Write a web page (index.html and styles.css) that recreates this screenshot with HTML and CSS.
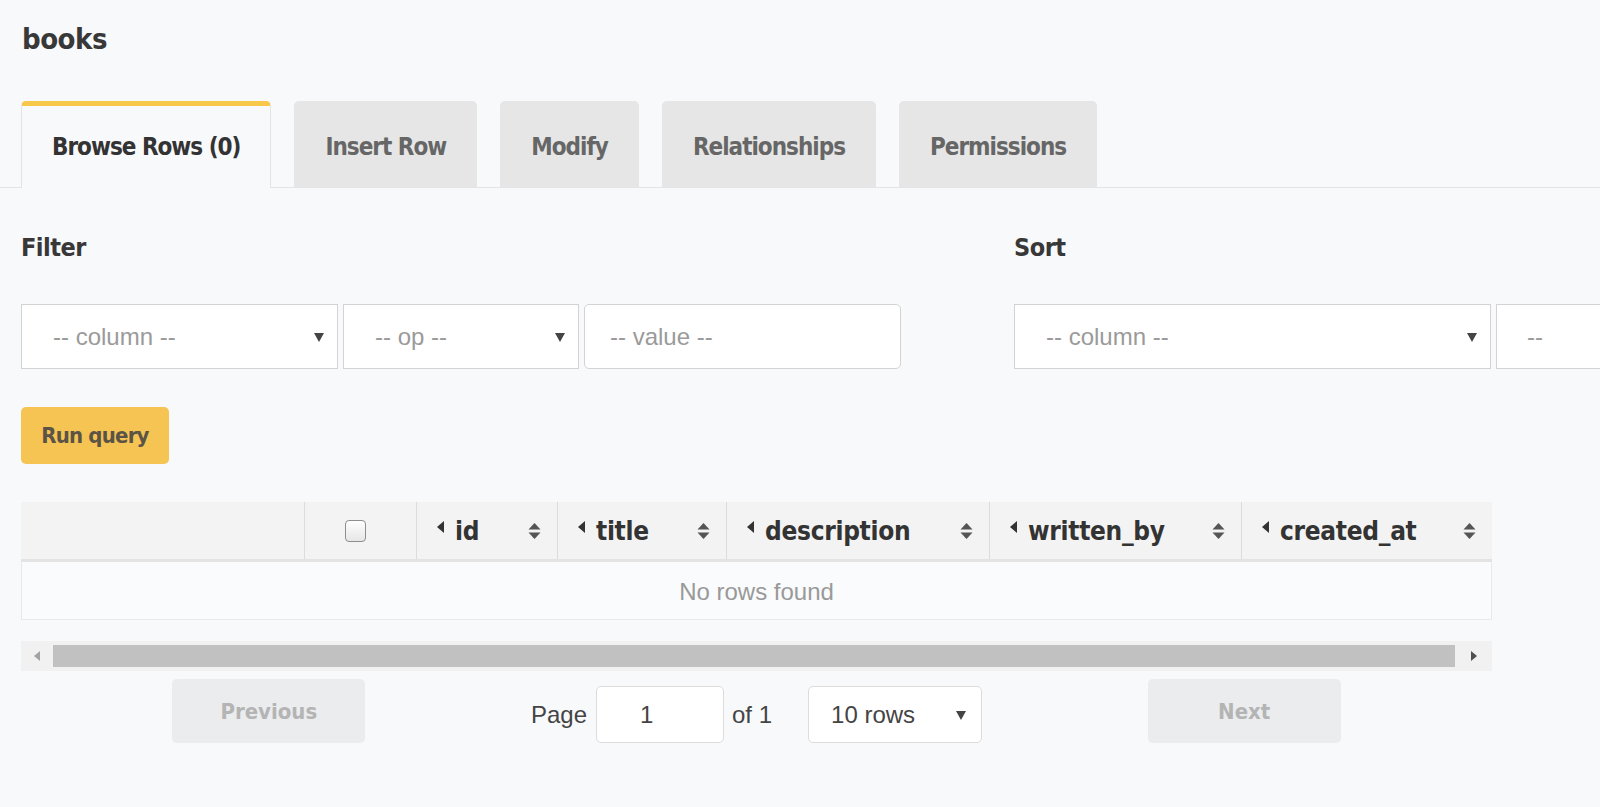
FILE: index.html
```html
<!DOCTYPE html>
<html lang="en">
<head>
<meta charset="utf-8">
<title>books</title>
<link rel="stylesheet" href="styles.css">
</head>
<body>
<div class="page">
  <h1 class="title">books</h1>

  <nav class="tabbar">
    <div class="tab active">Browse Rows (0)</div>
    <div class="tab">Insert Row</div>
    <div class="tab">Modify</div>
    <div class="tab">Relationships</div>
    <div class="tab">Permissions</div>
  </nav>

  <main class="content">
    <div class="query">
      <section class="filter">
        <h2 class="label">Filter</h2>
        <div class="controls">
          <div class="select sel-col"><span>-- column --</span><svg class="arrow" width="10" height="10" viewBox="0 0 10 10"><polygon points="0,1 10,1 5,10" fill="#444"/></svg></div>
          <div class="select sel-op"><span>-- op --</span><svg class="arrow" width="10" height="10" viewBox="0 0 10 10"><polygon points="0,1 10,1 5,10" fill="#444"/></svg></div>
          <div class="input sel-val"><span>-- value --</span></div>
        </div>
      </section>
      <section class="sort">
        <h2 class="label">Sort</h2>
        <div class="controls">
          <div class="select sort-col"><span>-- column --</span><svg class="arrow" width="10" height="10" viewBox="0 0 10 10"><polygon points="0,1 10,1 5,10" fill="#444"/></svg></div>
          <div class="select sort-dir"><span>--</span></div>
        </div>
      </section>
    </div>

    <button class="run">Run query</button>

    <div class="table">
      <div class="thead">
        <div class="th th-blank"></div>
        <div class="th th-check"><span class="checkbox"></span></div>
        <div class="th"><span class="th-name"><svg class="caret" width="7" height="12" viewBox="0 0 7 12"><polygon points="7,0 7,12 0,6" fill="#333"/></svg>id</span><svg class="sorter" width="13" height="16" viewBox="0 0 13 16"><polygon points="6.5,0 12.5,6.5 0.5,6.5" fill="#555"/><polygon points="0.5,9.5 12.5,9.5 6.5,16" fill="#555"/></svg></div>
        <div class="th"><span class="th-name"><svg class="caret" width="7" height="12" viewBox="0 0 7 12"><polygon points="7,0 7,12 0,6" fill="#333"/></svg>title</span><svg class="sorter" width="13" height="16" viewBox="0 0 13 16"><polygon points="6.5,0 12.5,6.5 0.5,6.5" fill="#555"/><polygon points="0.5,9.5 12.5,9.5 6.5,16" fill="#555"/></svg></div>
        <div class="th"><span class="th-name"><svg class="caret" width="7" height="12" viewBox="0 0 7 12"><polygon points="7,0 7,12 0,6" fill="#333"/></svg>description</span><svg class="sorter" width="13" height="16" viewBox="0 0 13 16"><polygon points="6.5,0 12.5,6.5 0.5,6.5" fill="#555"/><polygon points="0.5,9.5 12.5,9.5 6.5,16" fill="#555"/></svg></div>
        <div class="th"><span class="th-name"><svg class="caret" width="7" height="12" viewBox="0 0 7 12"><polygon points="7,0 7,12 0,6" fill="#333"/></svg>written_by</span><svg class="sorter" width="13" height="16" viewBox="0 0 13 16"><polygon points="6.5,0 12.5,6.5 0.5,6.5" fill="#555"/><polygon points="0.5,9.5 12.5,9.5 6.5,16" fill="#555"/></svg></div>
        <div class="th"><span class="th-name"><svg class="caret" width="7" height="12" viewBox="0 0 7 12"><polygon points="7,0 7,12 0,6" fill="#333"/></svg>created_at</span><svg class="sorter" width="13" height="16" viewBox="0 0 13 16"><polygon points="6.5,0 12.5,6.5 0.5,6.5" fill="#555"/><polygon points="0.5,9.5 12.5,9.5 6.5,16" fill="#555"/></svg></div>
      </div>
      <div class="empty">No rows found</div>
    </div>

    <div class="hscroll">
      <div class="sb-btn"><svg width="6" height="10" viewBox="0 0 6 10"><polygon points="6,0 6,10 0,5" fill="#a3a3a3"/></svg></div>
      <div class="sb-thumb"></div>
      <div class="sb-btn sb-right"><svg width="6" height="10" viewBox="0 0 6 10"><polygon points="0,0 0,10 6,5" fill="#505050"/></svg></div>
    </div>

    <div class="pager">
      <div class="pg-side pg-left"><button class="pg-btn">Previous</button></div>
      <div class="pg-center">
        <span class="pg-text">Page</span>
        <div class="pg-input">1</div>
        <span class="pg-text">of 1</span>
        <div class="pg-rows"><span>10 rows</span><svg class="arrow" width="10" height="10" viewBox="0 0 10 10"><polygon points="0,1 10,1 5,10" fill="#444"/></svg></div>
      </div>
      <div class="pg-side pg-right"><button class="pg-btn">Next</button></div>
    </div>
  </main>
</div>
</body>
</html>
```

FILE: styles.css
```css
* { box-sizing: border-box; }

html, body {
  margin: 0;
  padding: 0;
}

body {
  background: #f8f9fb;
  color: #333;
  font-family: "Liberation Sans", Arial, sans-serif;
  width: 1600px;
  height: 807px;
  overflow: hidden;
}

.page {
  width: 1600px;
}

.title,
.tab,
.label,
.run,
.th,
.pg-btn {
  font-family: "DejaVu Sans Condensed", "Liberation Sans", sans-serif;
  font-weight: 700;
}

.title {
  margin: 0;
  padding: 19px 0 0 22px;
  font-size: 29px;
  letter-spacing: -0.5px;
  line-height: 40px;
  color: #383838;
}

/* tabs */
.tabbar {
  margin-top: 42px;
  display: flex;
  align-items: flex-end;
  gap: 23px;
  padding-left: 21px;
  height: 87px;
  border-bottom: 1px solid #e2e4e7;
}

.tab {
  height: 86px;
  padding: 5px 31px 0;
  display: flex;
  align-items: center;
  background: #e6e6e6;
  color: #666;
  border-radius: 5px 5px 0 0;
  font-size: 24px;
  letter-spacing: -1px;
  white-space: nowrap;
}

.tab.active {
  height: 87px;
  margin-bottom: -1px;
  padding: 0 30px;
  background: #f8f9fb;
  color: #333;
  border-top: 5px solid #f8c84a;
  border-left: 1px solid #e3e4e6;
  border-right: 1px solid #e3e4e6;
}

/* content */
.content {
  padding-left: 21px;
}

.query {
  margin-top: 42px;
  display: grid;
  grid-template-columns: 993px auto;
}

.label {
  margin: 0;
  font-size: 25px;
  letter-spacing: -0.5px;
  line-height: 36px;
  color: #383838;
}

.controls {
  margin-top: 38px;
  display: flex;
  gap: 5px;
}

.select,
.input {
  height: 65px;
  background: #fff;
  border: 1px solid #d3d3d3;
  display: flex;
  align-items: center;
  justify-content: space-between;
  padding: 0 13px 0 31px;
  font-size: 24px;
  color: #9a9a9a;
  white-space: nowrap;
  flex: none;
}

.sel-col { width: 317px; }
.sel-op { width: 236px; }
.sel-val {
  width: 317px;
  border-radius: 5px;
  padding-left: 25px;
}
.sort-col { width: 477px; }
.sort-dir { width: 200px; padding-left: 30px; }

.arrow {
  flex: none;
}

.run {
  display: block;
  margin-top: 38px;
  width: 148px;
  height: 57px;
  padding: 0;
  border: none;
  border-radius: 5px;
  background: #f6c453;
  color: #5b5446;
  font-size: 22px;
  letter-spacing: -0.8px;
}

/* table */
.table {
  margin-top: 38px;
  width: 1471px;
}

.thead {
  display: grid;
  grid-template-columns: 284px 112px 141px 169px 263px 252px 250px;
  height: 60px;
  background: #f3f3f3;
  border-bottom: 3px solid #e3e3e3;
  box-shadow: 0 1px 0 #ececec;
}

.th {
  display: flex;
  align-items: center;
  justify-content: space-between;
  padding: 0 16px 0 20px;
  border-right: 1px solid #dcdcdc;
  font-size: 26px;
  letter-spacing: -0.3px;
  color: #333;
  white-space: nowrap;
}

.th:last-child { border-right: none; }

.th-check {
  justify-content: flex-start;
  padding-left: 40px;
}

.checkbox {
  width: 21px;
  height: 22px;
  border: 1px solid #8e8e8e;
  border-radius: 4px;
  background: linear-gradient(#fefefe, #e6e6e6);
}

.th-name {
  display: flex;
  align-items: center;
  gap: 11px;
}

.caret {
  position: relative;
  top: -4px;
  flex: none;
}

.sorter { flex: none; }

.empty {
  height: 58px;
  border: 1px solid #e8e9eb;
  border-top: none;
  background: #fafbfc;
  display: flex;
  align-items: center;
  justify-content: center;
  padding-top: 3px;
  font-size: 24px;
  color: #999;
}

/* scrollbar */
.hscroll {
  margin-top: 21px;
  width: 1471px;
  height: 30px;
  background: #f1f1f1;
  display: flex;
  align-items: center;
}

.sb-btn {
  width: 32px;
  height: 30px;
  display: flex;
  align-items: center;
  justify-content: center;
  flex: none;
}

.sb-thumb {
  width: 1402px;
  height: 22px;
  background: #c1c1c1;
  flex: none;
}

.sb-right {
  width: 37px;
}

/* pagination */
.pager {
  margin-top: 8px;
  width: 1471px;
  height: 64px;
  display: flex;
}

.pg-side {
  flex: 1;
  display: flex;
  justify-content: center;
}

.pg-left { padding-left: 4px; }
.pg-right { padding-right: 4px; }

.pg-btn {
  width: 193px;
  height: 64px;
  border: none;
  border-radius: 5px;
  background: #ebecee;
  color: #b4b4b4;
  font-size: 22px;
  padding: 0;
}

.pg-center {
  flex: 1;
  display: flex;
  align-items: center;
  justify-content: center;
  padding-top: 7px;
  font-size: 24px;
  color: #444;
}

.pg-input {
  width: 128px;
  height: 57px;
  margin: 0 8px 0 9px;
  background: #fff;
  border: 1px solid #dcdcdc;
  border-radius: 5px;
  display: flex;
  align-items: center;
  padding-left: 43px;
  color: #444;
}

.pg-rows {
  width: 174px;
  height: 57px;
  margin-left: 36px;
  background: #fff;
  border: 1px solid #dcdcdc;
  border-radius: 5px;
  display: flex;
  align-items: center;
  justify-content: space-between;
  padding: 0 15px 0 22px;
  color: #444;
}
```
